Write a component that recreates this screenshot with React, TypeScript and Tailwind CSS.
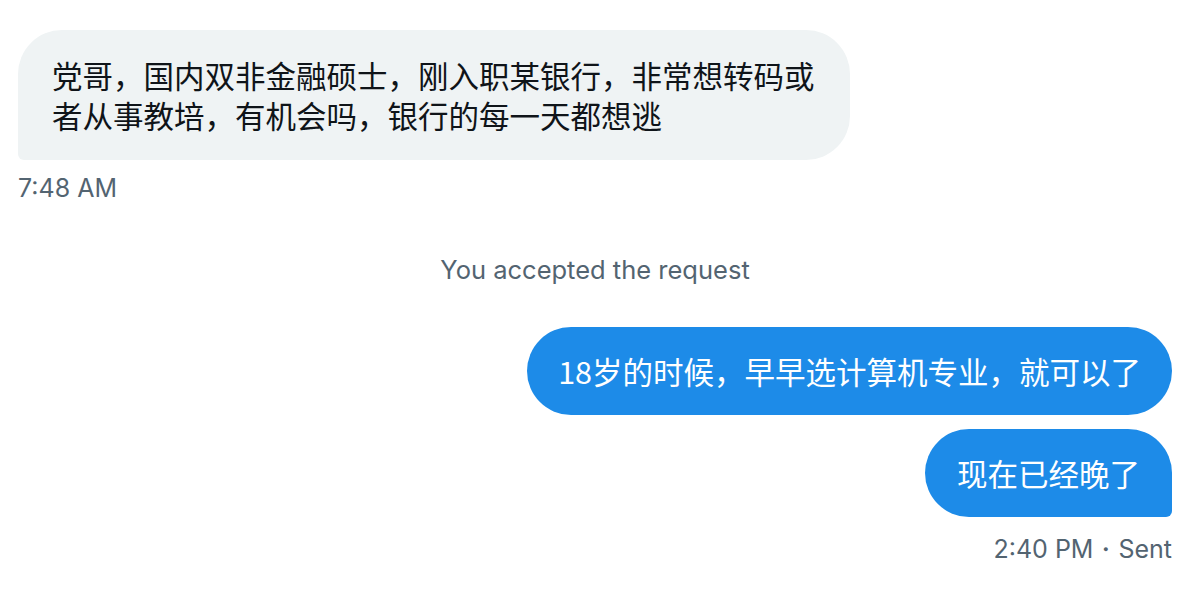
const cjk = { fontFamily: '"Noto Sans CJK SC", "Noto Sans", sans-serif' };

function Meta({ children }: { children: React.ReactNode }) {
  return (
    <div className="font-['Inter',sans-serif] text-[25px] leading-[30px] text-[#536471]">{children}</div>
  );
}

export default function App() {
  return (
    <div className="w-[1200px] h-[605px] bg-white flex flex-col pt-[30px] pl-[18px] pr-[28px] overflow-hidden">
      <div
        className="self-start max-w-[832px] bg-[#eff3f4] text-[#0f1419] text-[30.5px] leading-[40px] pl-[34px] pr-[32px] py-[25px] rounded-[44px] rounded-bl-[6px]"
        style={cjk}
      >
        党哥，国内双非金融硕士，刚入职某银行，非常想转码或者从事教培，有机会吗，银行的每一天都想逃
      </div>
      <div className="mt-[13px] self-start">
        <Meta>7:48 AM</Meta>
      </div>

      <div className="mt-[52px] text-center font-['Inter',sans-serif] text-[25.5px] leading-[30px] text-[#536471]">
        You accepted the request
      </div>

      <div
        className="mt-[42px] self-end bg-[#1d8be8] text-white text-[30.5px] leading-[40px] px-[31px] py-[24px] rounded-[45px]"
        style={cjk}
      >
        18岁的时候，早早选计算机专业，就可以了
      </div>
      <div
        className="mt-[14px] self-end bg-[#1d8be8] text-white text-[30.5px] leading-[40px] px-[32px] py-[24px] rounded-[44px] rounded-br-[6px]"
        style={cjk}
      >
        现在已经晚了
      </div>
      <div className="mt-[17px] self-end">
        <Meta>2:40 PM・Sent</Meta>
      </div>
    </div>
  );
}
